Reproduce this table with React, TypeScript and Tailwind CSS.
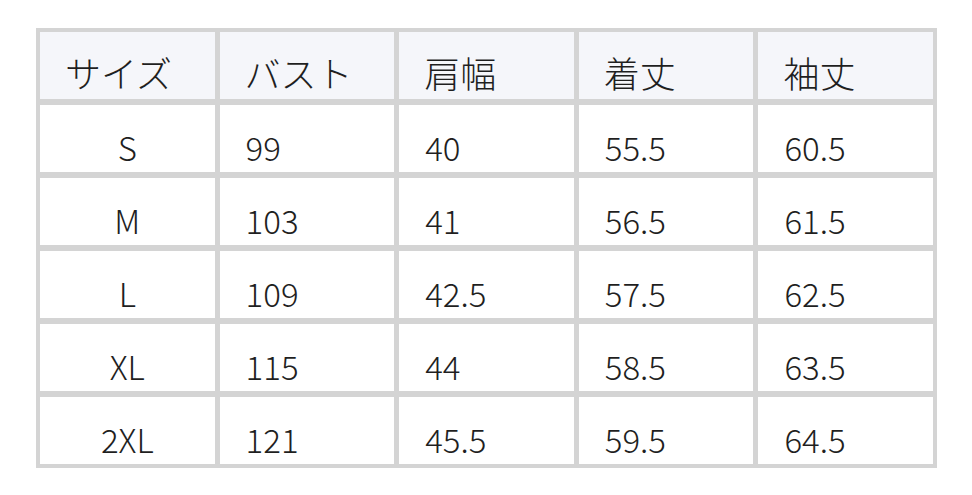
const headers = ['サイズ', 'バスト', '肩幅', '着丈', '袖丈']

const rows = [
  ['S', '99', '40', '55.5', '60.5'],
  ['M', '103', '41', '56.5', '61.5'],
  ['L', '109', '42.5', '57.5', '62.5'],
  ['XL', '115', '44', '58.5', '63.5'],
  ['2XL', '121', '45.5', '59.5', '64.5'],
]

export default function App() {
  return (
    <div
      className="min-h-[495px] w-[972px] bg-white pl-[36px] pt-[28px] font-light text-[#1f1f1f]"
      style={{ fontFamily: '"Noto Sans CJK JP", "Noto Sans", sans-serif' }}
    >
      <div className="grid w-[901px] grid-cols-5 gap-x-[5px] gap-y-[6px] bg-[#d4d4d4] p-1">
        {headers.map((h) => (
          <div
            key={h}
            className="flex h-[67px] items-end bg-[#f5f6fa] px-[25px] pb-[3px] text-[36px] leading-[48px]"
          >
            {h}
          </div>
        ))}
        {rows.map((row) =>
          row.map((cell, i) => (
            <div
              key={row[0] + i}
              className={
                i === 0
                  ? 'flex h-[67px] items-end justify-center bg-white pb-px text-[33px] leading-[48px]'
                  : 'flex h-[67px] items-end bg-white px-[26px] pb-px text-[33px] leading-[48px]'
              }
            >
              {cell}
            </div>
          ))
        )}
      </div>
    </div>
  )
}
